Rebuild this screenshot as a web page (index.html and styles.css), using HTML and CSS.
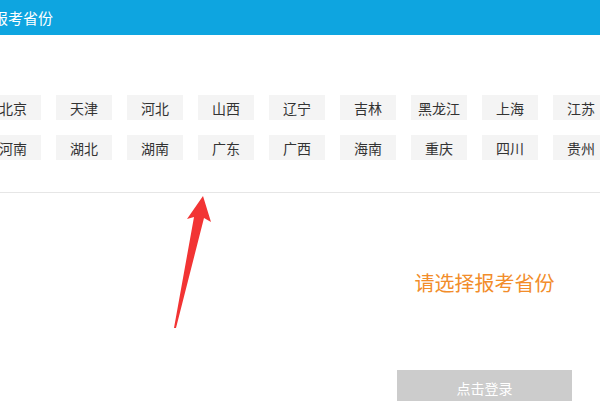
FILE: index.html
```html
<!DOCTYPE html>
<html lang="zh">
<head>
<meta charset="utf-8">
<title>报考省份</title>
<link rel="stylesheet" href="styles.css">
</head>
<body>
<header class="top-bar"><span class="title">报考省份</span></header>
<section class="provinces">
  <span class="prov">北京</span><span class="prov">天津</span><span class="prov">河北</span><span class="prov">山西</span><span class="prov">辽宁</span><span class="prov">吉林</span><span class="prov">黑龙江</span><span class="prov">上海</span><span class="prov">江苏</span>
  <span class="prov">河南</span><span class="prov">湖北</span><span class="prov">湖南</span><span class="prov">广东</span><span class="prov">广西</span><span class="prov">海南</span><span class="prov">重庆</span><span class="prov">四川</span><span class="prov">贵州</span>
</section>
<hr class="divider">
<section class="login">
  <p class="prompt">请选择报考省份</p>
  <button class="login-btn">点击登录</button>
</section>
<svg class="arrow" width="60" height="140" viewBox="170 192 60 140">
  <polygon points="203,196 211,222 204,218 176,328 174,328 194,217 187,219" fill="#f23434"/>
</svg>
</body>
</html>
```
FILE: styles.css
```css
html, body {
  margin: 0;
  padding: 0;
  background: #ffffff;
  font-family: "Noto Sans CJK SC", "Noto Sans", sans-serif;
  overflow: hidden;
}
body {
  position: relative;
  width: 600px;
  height: 401px;
}
.top-bar {
  height: 35px;
  background: #0ea5e0;
  display: flex;
  align-items: center;
}
.title {
  margin-left: -7px;
  color: #ffffff;
  font-size: 15px;
  line-height: 1;
}
.provinces {
  display: grid;
  grid-template-columns: repeat(9, 56px);
  grid-auto-rows: 25px;
  column-gap: 15px;
  row-gap: 15px;
  margin: 60px 0 0 -15px;
  width: 700px;
}
.prov {
  background: #f4f4f4;
  color: #333333;
  font-size: 14px;
  display: flex;
  align-items: center;
  justify-content: center;
  line-height: 1;
}
.divider {
  border: none;
  border-top: 1px solid #e6e6e6;
  margin: 32px 0 0 0;
  height: 0;
}
.login {
  display: flex;
  flex-direction: column;
  align-items: center;
  width: 175px;
  margin-left: 397px;
}
.prompt {
  margin: 78px 0 0 0;
  color: #f28d2a;
  font-size: 20px;
  line-height: 24px;
  white-space: nowrap;
}
.login-btn {
  margin-top: 75px;
  width: 175px;
  height: 36px;
  border: none;
  background: #cccccc;
  color: #ffffff;
  font-family: inherit;
  font-size: 14px;
  padding: 0;
}
.arrow {
  position: absolute;
  left: 170px;
  top: 192px;
}
```
